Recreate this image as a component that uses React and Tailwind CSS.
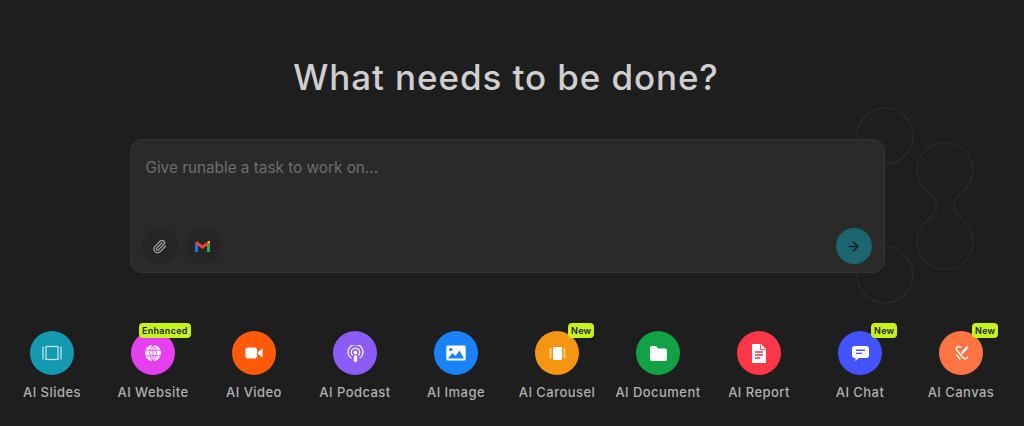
import { Paperclip, ArrowRight } from 'lucide-react';

const SlidesIcon = () => (
  <svg width="20" height="20" viewBox="0 0 20 20" fill="none" stroke="#bfe6ee" strokeWidth="1.3">
    <rect x="4" y="3.500" width="12" height="13" />
    <path d="M1 3.500v13M19 3.500v13" />
  </svg>
);

const GlobeIcon = () => (
  <svg width="16" height="16" viewBox="0 0 20 20">
    <circle cx="10" cy="10" r="10" fill="#fff" />
    <path d="M0 6.500h20M0 13.500h20M10 0v20M10 0c-5.500 5-5.500 15 0 20M10 0c5.500 5 5.500 15 0 20" fill="none" stroke="#e63ff0" strokeWidth="1.100" />
  </svg>
);

const VideoIcon = () => (
  <svg width="18" height="18" viewBox="0 0 20 20" fill="#fff">
    <rect x="0.500" y="4" width="13" height="12" rx="3" />
    <path d="M14.500 8.800 19.500 5v10l-5-3.800z" />
  </svg>
);

const PodcastIcon = () => (
  <svg width="17" height="17" viewBox="0 0 20 20" fill="none" stroke="#fff" strokeWidth="1.500">
    <path d="M5.200 15.600a8.800 8.800 0 1 1 9.600 0" />
    <path d="M6.800 12.400a5 5 0 1 1 6.400 0" />
    <circle cx="10" cy="8.800" r="2.300" fill="#fff" stroke="none" />
    <rect x="8" y="12.200" width="4" height="7.800" rx="1.800" fill="#fff" stroke="none" />
  </svg>
);

const ImageIcon = () => (
  <svg width="20" height="20" viewBox="0 0 20 20">
    <rect x="0.300" y="2.500" width="19.400" height="15" rx="1.500" fill="#fff" />
    <circle cx="4.800" cy="6.600" r="1.700" fill="#1a82f7" />
    <path d="M2 15.600 6.500 10l3 3 4-5.500 4.500 8.100z" fill="#1a82f7" />
  </svg>
);

const CarouselIcon = () => (
  <svg width="17" height="17" viewBox="0 0 17 17" fill="#fff">
    <rect x="4" y="2" width="9" height="13" rx="1" />
    <rect x="0.500" y="3.500" width="2" height="10" opacity=".55" />
    <rect x="14.500" y="3.500" width="2" height="10" opacity=".55" />
  </svg>
);

const FolderIcon = () => (
  <svg width="17" height="15" viewBox="0 0 17 15" fill="#fff">
    <path d="M0 2a2 2 0 0 1 2-2h4l2 2.500h7a2 2 0 0 1 2 2V13a2 2 0 0 1-2 2H2a2 2 0 0 1-2-2z" />
  </svg>
);

const ReportIcon = () => (
  <svg width="14" height="19" viewBox="0 0 14 19">
    <path d="M0 0h9l5 5v14H0z" fill="#fff" />
    <path d="M3 8h8M3 11h8M3 14h5" stroke="#fb3748" strokeWidth="1.300" />
    <path d="M8.500 .5v5h5" fill="none" stroke="#fb3748" strokeWidth=".8" />
  </svg>
);

const ChatIcon = () => (
  <svg width="17" height="15" viewBox="0 0 17 15">
    <path d="M3 0h11a3 3 0 0 1 3 3v6a3 3 0 0 1-3 3H7l-3.500 3v-3H3a3 3 0 0 1-3-3V3a3 3 0 0 1 3-3z" fill="#fff" />
    <path d="M4 4.200h9M4 7.400h6" stroke="#4353ff" strokeWidth="1.400" />
  </svg>
);

const CanvasIcon = () => (
  <svg width="15" height="16" viewBox="0 0 15 16" fill="none" stroke="#fff" strokeWidth="1.400" strokeLinecap="round" strokeLinejoin="round">
    <path d="M7 2C4 .5 1 3 3 5.500l6 7c1.500 2 4 1.500 4.500-.5" />
    <path d="M2.500 10 6 14" />
    <path d="M13 2.500 8.500 7.500" strokeWidth="2.600" />
  </svg>
);

const GmailIcon = () => (
  <svg width="15" height="11" viewBox="0 0 15 11" fill="none">
    <path d="M1.500 11V1.500" stroke="#1a73e8" strokeWidth="3" />
    <path d="M13.500 11V1.500" stroke="#34a853" strokeWidth="3" />
    <path d="M1.300 1.500 7.500 6.200 13.700 1.500" stroke="#ea4335" strokeWidth="3" />
    <path d="M13.300 1.700 15 .4" stroke="#fbbc04" strokeWidth="2.500" />
  </svg>
);

const tools = [
  { label: 'AI Slides', bg: 'bg-[#1399b0]', Icon: SlidesIcon },
  { label: 'AI Website', bg: 'bg-[#e63ff0]', Icon: GlobeIcon, badge: 'Enhanced' },
  { label: 'AI Video', bg: 'bg-[#ff5a0a]', Icon: VideoIcon },
  { label: 'AI Podcast', bg: 'bg-[#8b5cf6]', Icon: PodcastIcon },
  { label: 'AI Image', bg: 'bg-[#1a82f7]', Icon: ImageIcon },
  { label: 'AI Carousel', bg: 'bg-[#f59512]', Icon: CarouselIcon, badge: 'New' },
  { label: 'AI Document', bg: 'bg-[#12a144]', Icon: FolderIcon },
  { label: 'AI Report', bg: 'bg-[#fb3748]', Icon: ReportIcon },
  { label: 'AI Chat', bg: 'bg-[#4353ff]', Icon: ChatIcon, badge: 'New' },
  { label: 'AI Canvas', bg: 'bg-[#ff7443]', Icon: CanvasIcon, badge: 'New' },
];

const ToolItem = ({ label, bg, Icon, badge }) => (
  <div className="flex flex-col items-center">
    <div className={`relative flex h-[44px] w-[44px] items-center justify-center rounded-full ${bg}`}>
      <Icon />
      {badge === 'Enhanced' && (
        <span className="absolute left-[8px] top-[-8px] rounded-[4px] bg-[#c6f31b] px-[3px] text-[9px] font-semibold leading-[15px] tracking-[0.3px] text-[#1e1e1e]">
          Enhanced
        </span>
      )}
      {badge === 'New' && (
        <span className="absolute left-[33px] top-[-8px] rounded-[4px] bg-[#c6f31b] px-[3px] text-[9px] font-semibold leading-[15px] tracking-[0.3px] text-[#1e1e1e]">
          New
        </span>
      )}
    </div>
    <span className="mt-[8px] whitespace-nowrap text-[13px] font-medium leading-[18px] tracking-[0.45px] text-[#b0b0b0]">
      {label}
    </span>
  </div>
);

const App = () => {
  return (
    <div className="relative h-[426px] w-[1024px] overflow-hidden bg-[#1e1e1e] font-['Inter',sans-serif]">
      {/* outline shapes behind the prompt box */}
      <svg className="absolute left-[850px] top-[100px]" width="130" height="210" viewBox="0 0 130 210" fill="none" stroke="#2c2c2c" strokeWidth="1.200">
        <circle cx="35" cy="36" r="28" />
        <circle cx="35" cy="175" r="28" />
        <path d="M95 42.500c15.500 0 28 12.500 28 28 0 9-4 16-11 22-4 3-8.500 6-8.500 13.500s4.500 10.500 8.500 13.500c7 6 11 13 11 22 0 15.500-12.500 28-28 28s-28-12.500-28-28c0-9 4-16 11-22 4-3 8.500-6 8.500-13.500s-4.500-10.500-8.500-13.500c-7-6-11-13-11-22 0-15.500 12.500-28 28-28z" />
      </svg>

      <div className="relative flex w-[1014px] flex-col items-center pt-[55px]">
        <h1 className="pr-[2px] text-[35px] font-medium leading-[44px] tracking-[0.9px] text-[#cfcfcf]">What needs to be done?</h1>

        <div className="mt-[40px] flex h-[134px] w-[755px] flex-col justify-between rounded-[12px] border border-[#333333] bg-[#2a2a2a] pb-[8px] pl-[11px] pr-[12px] pt-[17px]">
          <p className="px-[4px] text-[15.300px] leading-[22px] text-[#6e6e6e]">Give runable a task to work on...</p>
          <div className="flex items-center gap-[7px]">
            <button className="flex h-[36px] w-[36px] items-center justify-center rounded-full bg-[#252525]">
              <Paperclip size={15} color="#a3a3a3" />
            </button>
            <button className="flex h-[36px] w-[36px] items-center justify-center rounded-full bg-[#252525]">
              <GmailIcon />
            </button>
            <button className="ml-auto flex h-[36px] w-[36px] items-center justify-center rounded-full bg-[#1d6570]">
              <ArrowRight size={15} color="#1e1e1e" strokeWidth={2.400} />
            </button>
          </div>
        </div>

        <div className="ml-[1.500px] mt-[58px] grid w-[1010px] grid-cols-10 self-start">
          {tools.map((tool) => (
            <ToolItem key={tool.label} {...tool} />
          ))}
        </div>
      </div>
    </div>
  );
};

export default App;
